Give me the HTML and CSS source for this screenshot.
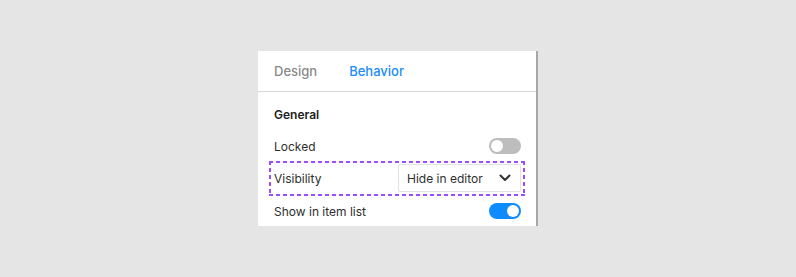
FILE: index.html
```html
<!DOCTYPE html>
<html>
<head>
<meta charset="utf-8">
<link rel="stylesheet" href="styles.css">
</head>
<body>
<div class="panel">
  <div class="tabs">
    <span class="tab">Design</span>
    <span class="tab active">Behavior</span>
  </div>
  <div class="content">
    <div class="section-title">General</div>
    <div class="row">
      <span class="label">Locked</span>
      <span class="toggle"><span class="knob"></span></span>
    </div>
    <div class="row row-highlight">
      <span class="label">Visibility</span>
      <div class="select">
        <span>Hide in editor</span>
        <svg class="chevron" width="12" height="8" viewBox="0 0 12 8"><path d="M1.5 1.5 L6 6 L10.5 1.5" fill="none" stroke="#333" stroke-width="2" stroke-linecap="round" stroke-linejoin="round"/></svg>
      </div>
    </div>
    <div class="row">
      <span class="label">Show in item list</span>
      <span class="toggle on"><span class="knob"></span></span>
    </div>
  </div>
</div>
</body>
</html>
```
FILE: styles.css
```css
html, body {
  margin: 0;
  padding: 0;
  background: #e5e5e5;
  font-family: Inter, "Noto Sans", sans-serif;
}
.panel {
  margin: 51px 0 0 258px;
  width: 278px;
  height: 175px;
  background: #fff;
  border-right: 2px solid #a8a8a8;
  box-sizing: content-box;
}
.tabs {
  height: 40px;
  border-bottom: 1px solid #d6d6d6;
  display: flex;
  align-items: center;
  padding-left: 16px;
  gap: 32px;
}
.tab {
  font-size: 13px;
  color: #8a8a8a;
  font-weight: 500;
}
.tab.active {
  color: #1a8cff;
}
.content {
  padding: 13px 15px 0 16px;
}
.section-title {
  font-size: 12px;
  font-weight: 600;
  color: #222;
  height: 20px;
  line-height: 20px;
  margin-bottom: 7px;
}
.row {
  display: flex;
  align-items: center;
  justify-content: space-between;
  height: 28px;
  margin-bottom: 4px;
}
.label {
  font-size: 12px;
  color: #2e2e2e;
}
.row-highlight {
  position: relative;
  margin-bottom: 5px;
}
.row-highlight::after {
  content: "";
  position: absolute;
  top: -3px;
  bottom: -4px;
  left: -5px;
  right: -4px;
  pointer-events: none;
  background:
    linear-gradient(90deg, #9b4dff 4px, transparent 4px) top left / 7px 2px repeat-x,
    linear-gradient(90deg, #9b4dff 4px, transparent 4px) bottom left / 7px 2px repeat-x,
    linear-gradient(180deg, #9b4dff 4px, transparent 4px) top left / 2px 7px repeat-y,
    linear-gradient(180deg, #9b4dff 4px, transparent 4px) top right / 2px 7px repeat-y;
}
.toggle {
  width: 32px;
  height: 16px;
  border-radius: 8px;
  background: #bdbdbd;
  position: relative;
  display: block;
}
.toggle .knob {
  position: absolute;
  top: 2px;
  left: 2px;
  width: 12px;
  height: 12px;
  border-radius: 50%;
  background: #fff;
}
.toggle.on {
  background: #0d8bff;
}
.toggle.on .knob {
  left: 18px;
}
.select {
  width: 123px;
  height: 28px;
  box-sizing: border-box;
  border: 1px solid #e2e2e2;
  border-radius: 2px;
  display: flex;
  align-items: center;
  justify-content: space-between;
  padding: 0 9px 0 8px;
  font-size: 12px;
  color: #2e2e2e;
}
.chevron {
  display: block;
}
```
